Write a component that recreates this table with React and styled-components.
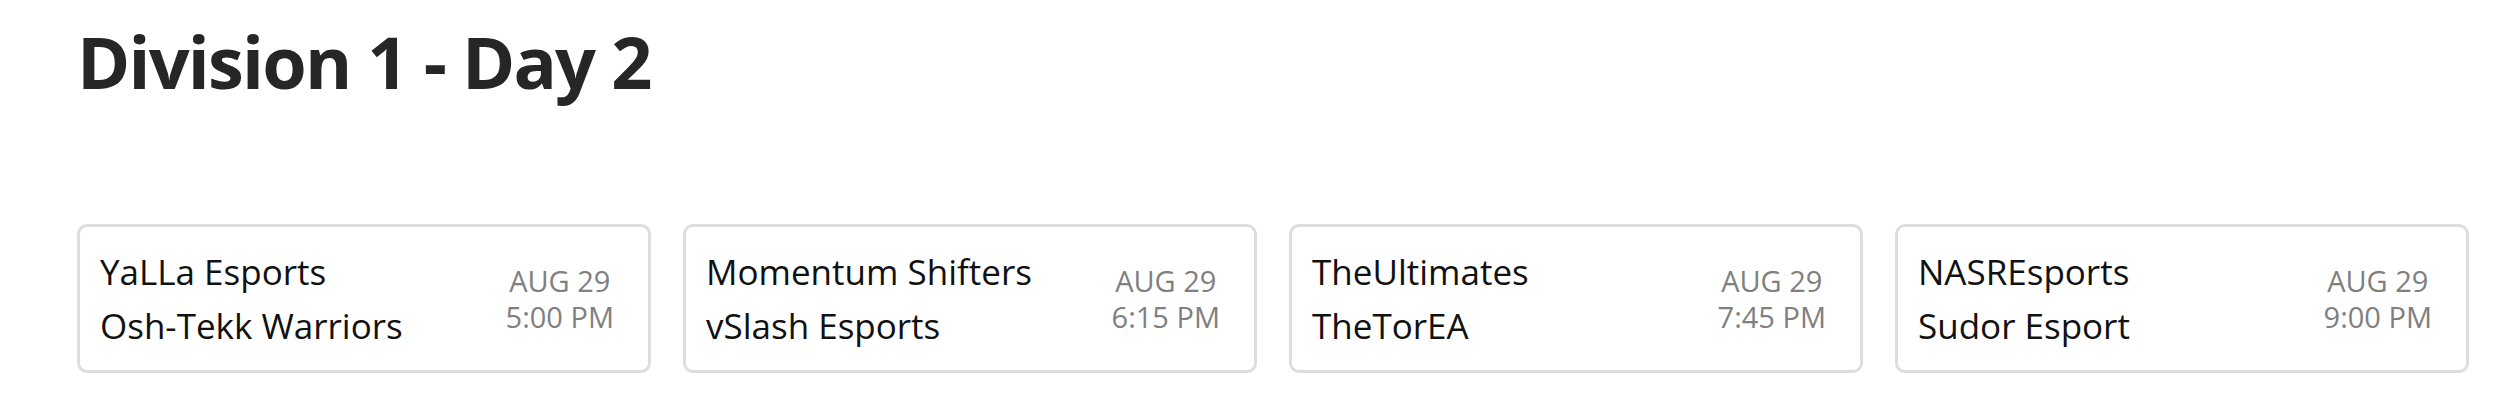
import React from 'react';
import styled, { createGlobalStyle } from 'styled-components';

const matches = [
    { id: 1, home: 'YaLLa Esports', away: 'Osh-Tekk Warriors', date: 'AUG 29', time: '5:00 PM' },
    { id: 2, home: 'Momentum Shifters', away: 'vSlash Esports', date: 'AUG 29', time: '6:15 PM' },
    { id: 3, home: 'TheUltimates', away: 'TheTorEA', date: 'AUG 29', time: '7:45 PM' },
    { id: 4, home: 'NASREsports', away: 'Sudor Esport', date: 'AUG 29', time: '9:00 PM' },
];

function App() {
    return (
        <>
            <GlobalStyle />
            <StPage>
                <StTitle>Division 1 - Day 2</StTitle>
                <StGrid>
                    {matches.map((match) => {
                        return (
                            <StCard key={match.id}>
                                <StTeams>
                                    <StTeam>{match.home}</StTeam>
                                    <StTeam>{match.away}</StTeam>
                                </StTeams>
                                <StWhen>
                                    <span>{match.date}</span>
                                    <span>{match.time}</span>
                                </StWhen>
                            </StCard>
                        );
                    })}
                </StGrid>
            </StPage>
        </>
    );
}

const GlobalStyle = createGlobalStyle`
    body {
        margin: 0;
        background: #ffffff;
        font-family: 'Open Sans', 'Noto Sans', sans-serif;
    }
`;
const StPage = styled.div`
    padding: 11px 44px 0 77px;
`;
const StTitle = styled.h1`
    margin: 0;
    font-size: 72px;
    font-weight: 700;
    line-height: 100px;
    color: #262626;
    letter-spacing: -1.8px;
`;
const StGrid = styled.div`
    margin-top: 113px;
    display: grid;
    grid-template-columns: repeat(4, 1fr);
    gap: 32px;
`;
const StCard = styled.div`
    height: 149px;
    box-sizing: border-box;
    border: 3px solid #dddddd;
    border-radius: 10px;
    padding: 0 34px 0 20px;
    display: flex;
    align-items: center;
    justify-content: space-between;
`;
const StTeams = styled.div`
    display: flex;
    flex-direction: column;
`;
const StTeam = styled.div`
    font-size: 35px;
    line-height: 54px;
    color: #111111;
`;
const StWhen = styled.div`
    display: flex;
    flex-direction: column;
    align-items: center;
    font-size: 29px;
    line-height: 36px;
    color: #808080;
    margin-top: 0;
`;

export default App;
